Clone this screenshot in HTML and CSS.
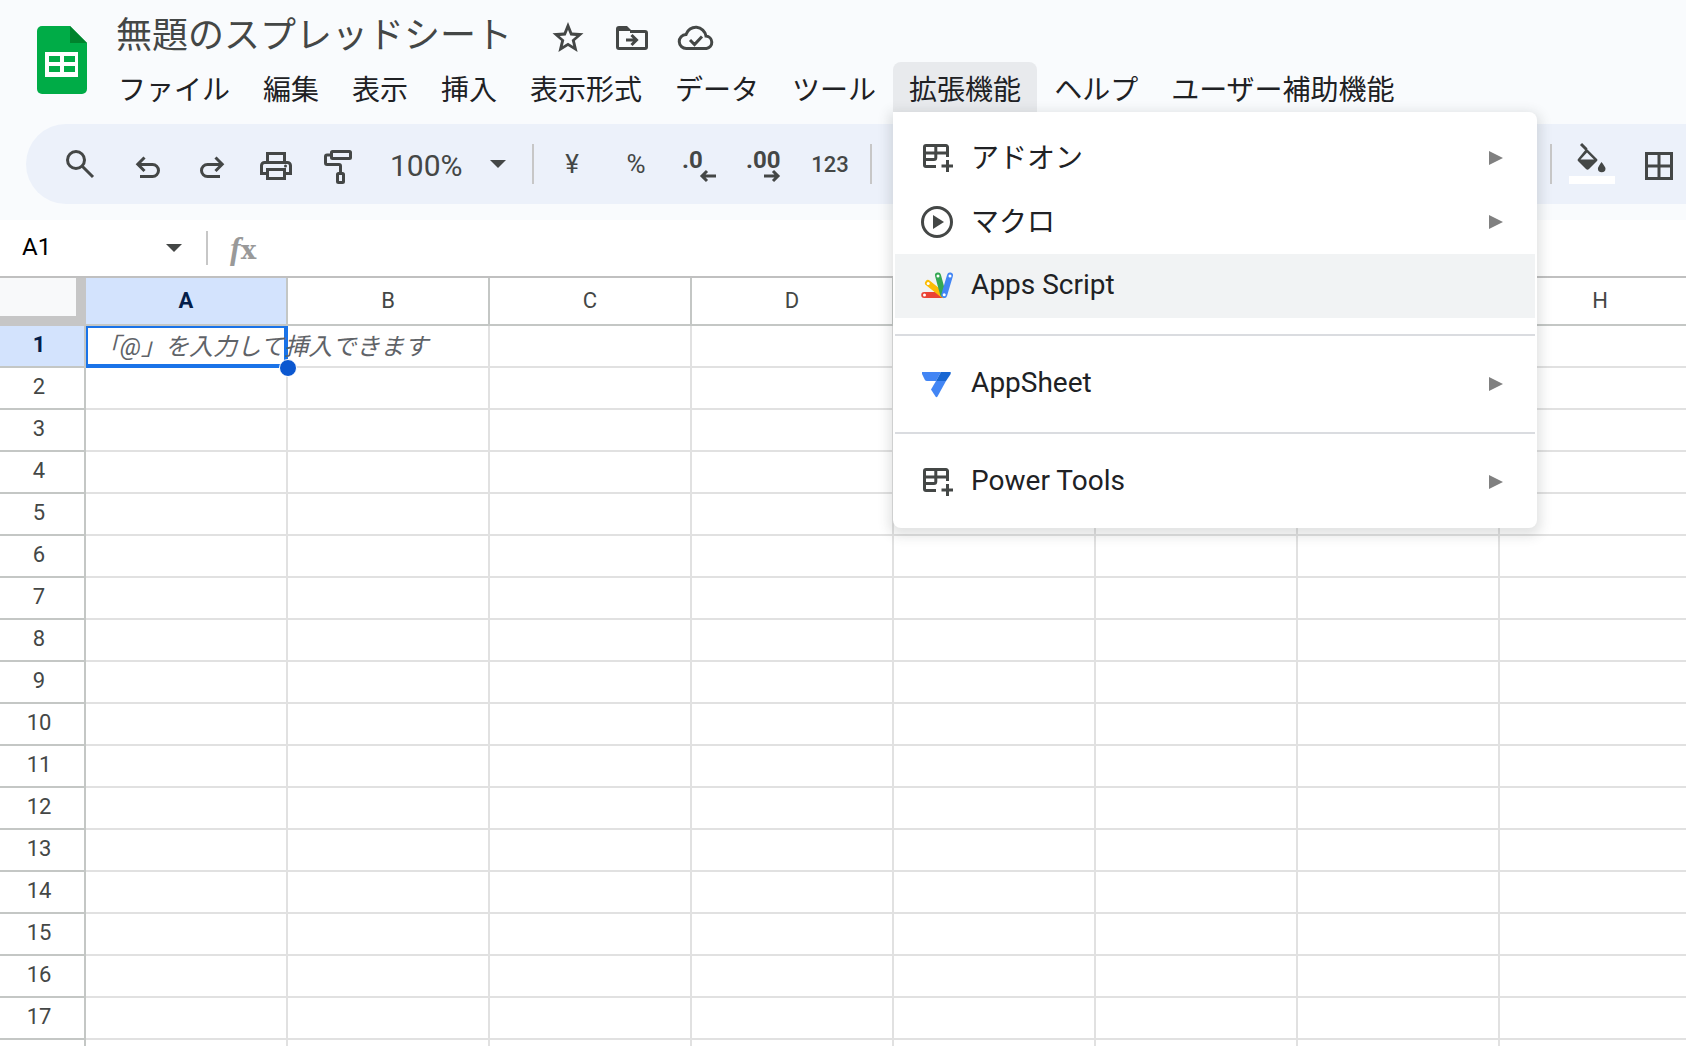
FILE: index.html
```html
<!DOCTYPE html>
<html lang="ja">
<head>
    <meta charset="UTF-8">
    <meta name="viewport" content="width=device-width, initial-scale=1.0">
    <title>無題のスプレッドシート</title>
    <link rel="stylesheet" href="styles.css">
</head>
<body>
    <header class="header">
        <a class="logo" href="#" aria-label="スプレッドシート ホーム">
            <svg width="50" height="68" viewBox="0 0 50 68">
                <path fill="#00ac47" d="M5 0H33L50 17V63a5 5 0 0 1-5 5H5a5 5 0 0 1-5-5V5a5 5 0 0 1 5-5z"/>
                <path fill="#00832d" d="M33 0V17H50z"/>
                <path fill="#fff" fill-rule="evenodd" d="M8 26H41V51H8zM12 30V36H23V30zM27 30V36H38V30zM12 40V46H23V40zM27 40V46H38V40z"/>
            </svg>
        </a>
        <div class="header-main">
            <div class="title-row">
                <input class="title" type="text" value="無題のスプレッドシート" aria-label="名前を変更">
                <button class="icon-button" aria-label="スター">
                    <svg class="icon" viewBox="0 0 40 40">
                        <path fill="#444746" fill-rule="evenodd" d="M20 8l4.200 10.400 11.300 .9-8.600 7.400 2.700 11.300-9.600-6-9.600 6 2.700-11.300-8.600-7.400 11.300-.9zM20 15.700l-2.300 5.700-6 .5 4.600 4-1.500 6.100 5.200-3.300 5.200 3.300-1.500-6.100 4.600-4-6-.5z"/>
                    </svg>
                </button>
                <button class="icon-button" aria-label="移動">
                    <svg class="icon" viewBox="0 0 40 40">
                        <path fill="#444746" d="M7 12H15L20 17H4V15a3 3 0 0 1 3-3z"/>
                        <path class="line" d="M18 17.500H33a1.500 1.500 0 0 1 1.500 1.500V33a1.500 1.500 0 0 1-1.500 1.500H7A1.500 1.500 0 0 1 5.500 33V15M14 26H24M19.500 21l5 5-5 5"/>
                    </svg>
                </button>
                <button class="icon-button" aria-label="ドキュメントのステータスを確認">
                    <svg class="icon" viewBox="0 0 40 40">
                        <path class="line" d="M10.500 34.500a7 7 0 0 1-.5-14A10.300 10.300 0 0 1 30 22a6.300 6.300 0 0 1 .5 12.500zM14 26l4.500 4.500 7.500-8"/>
                    </svg>
                </button>
            </div>
            <nav class="menubar">
                <div class="menubar-item"><button>ファイル</button></div>
                <div class="menubar-item"><button>編集</button></div>
                <div class="menubar-item"><button>表示</button></div>
                <div class="menubar-item"><button>挿入</button></div>
                <div class="menubar-item"><button>表示形式</button></div>
                <div class="menubar-item"><button>データ</button></div>
                <div class="menubar-item"><button>ツール</button></div>
                <div class="menubar-item open">
                    <button aria-expanded="true">拡張機能</button>
                    <div class="menu">
                        <button class="menu-row">
                            <svg class="menu-icon" viewBox="0 0 32 32"><use href="#addon"/></svg>
                            <span>アドオン</span>
                            <svg class="submenu-arrow" viewBox="0 0 14 14"><path d="M0 0L14 7L0 14z"/></svg>
                        </button>
                        <button class="menu-row">
                            <svg class="menu-icon" viewBox="0 0 32 32">
                                <circle class="line" cx="16" cy="16" r="14.500"/>
                                <path fill="#444746" d="M12 9L23 16L12 23z"/>
                            </svg>
                            <span>マクロ</span>
                            <svg class="submenu-arrow" viewBox="0 0 14 14"><path d="M0 0L14 7L0 14z"/></svg>
                        </button>
                        <button class="menu-row active">
                            <svg class="menu-icon" viewBox="0 0 32 32" stroke-width="6" stroke-linecap="round">
                                <path stroke="#ea4335" d="M3.200 25H22"/>
                                <path stroke="#fbbc04" d="M7 13L22 25"/>
                                <path stroke="#34a853" d="M17 5.500L22 24"/>
                                <path stroke="#4285f4" d="M29 5.500L23.200 25"/>
                                <g fill="#fff">
                                    <circle cx="3.500" cy="25" r="1.500"/>
                                    <circle cx="7.200" cy="13.500" r="1.500"/>
                                    <circle cx="17" cy="6" r="1.500"/>
                                    <circle cx="29" cy="6" r="1.500"/>
                                    <circle cx="23.200" cy="24.800" r="1.500"/>
                                </g>
                            </svg>
                            <span>Apps Script</span>
                        </button>
                        <hr>
                        <button class="menu-row">
                            <svg class="menu-icon" viewBox="0 0 32 32">
                                <path fill="#4285f4" d="M1 4H20L15 13H6q-1.500 0-2.200-1.300L1 6z"/>
                                <path fill="#1967d2" d="M20 4H29.700V6L25 13H15z"/>
                                <path fill="#4285f4" d="M15 13H25L16.500 28.500q-1 1.500-2 0L10 21.500z"/>
                            </svg>
                            <span>AppSheet</span>
                            <svg class="submenu-arrow" viewBox="0 0 14 14"><path d="M0 0L14 7L0 14z"/></svg>
                        </button>
                        <hr>
                        <button class="menu-row">
                            <svg class="menu-icon" viewBox="0 0 32 32"><use href="#addon"/></svg>
                            <span>Power Tools</span>
                            <svg class="submenu-arrow" viewBox="0 0 14 14"><path d="M0 0L14 7L0 14z"/></svg>
                        </button>
                    </div>
                </div>
                <div class="menubar-item"><button>ヘルプ</button></div>
                <div class="menubar-item"><button>ユーザー補助機能</button></div>
            </nav>
        </div>
    </header>

    <div class="toolbar">
        <button class="icon-button search" aria-label="メニューを検索">
            <svg class="icon" viewBox="0 0 40 40">
                <circle class="line" cx="16" cy="16" r="8.500"/>
                <path class="line" d="M22 22L33 33"/>
            </svg>
        </button>
        <button class="icon-button" aria-label="元に戻す">
            <svg class="icon" viewBox="0 0 40 40">
                <path class="line" d="M12 32.500H24.500a6 6 0 0 0 0-12H10M16.500 13.500L9.800 20.300L16.500 27"/>
            </svg>
        </button>
        <button class="icon-button" aria-label="やり直し">
            <svg class="icon" viewBox="0 0 40 40">
                <path class="line" d="M28 32.500H15.500a6 6 0 0 1 0-12H30M23.500 13.500L30.200 20.300L23.500 27"/>
            </svg>
        </button>
        <button class="icon-button" aria-label="印刷">
            <svg class="icon" viewBox="0 0 40 40">
                <path class="line" d="M11.500 18V9.500H28.500V18M11.500 29.500H5.500V21.500a3 3 0 0 1 3-3H31.500a3 3 0 0 1 3 3V29.500H28.500M11.500 25.500H28.500V34.500H11.500z"/>
                <circle fill="#444746" cx="29.500" cy="22" r="1.500"/>
            </svg>
        </button>
        <button class="icon-button" aria-label="書式を貼り付け">
            <svg class="icon" viewBox="0 0 40 40">
                <rect class="line" x="11.500" y="7.500" width="19" height="7" rx="1"/>
                <rect class="line" x="17.500" y="29.500" width="6" height="9" rx="1"/>
                <path class="line" d="M11 11H7a1.500 1.500 0 0 0-1.500 1.500V19a1.500 1.500 0 0 0 1.500 1.500H19a1.500 1.500 0 0 1 1.500 1.500V29"/>
            </svg>
        </button>
        <div class="zoom">
            <select aria-label="ズーム">
                <option>50%</option>
                <option selected>100%</option>
                <option>200%</option>
            </select>
            <svg class="caret" viewBox="0 0 16 8"><path d="M0 0H16L8 8z"/></svg>
        </div>
        <span class="separator"></span>
        <button class="icon-button" aria-label="通貨の表示形式">¥</button>
        <button class="icon-button" aria-label="パーセント表示形式">%</button>
        <button class="icon-button" aria-label="小数点以下の桁数を減らす">
            <svg class="icon" viewBox="0 0 40 40">
                <text x="2" y="24">.0</text>
                <path class="line" d="M36 32H23M27 27L22 32L27 37"/>
            </svg>
        </button>
        <button class="icon-button" aria-label="小数点以下の桁数を増やす">
            <svg class="icon" viewBox="0 0 40 40">
                <text x="2" y="24">.00</text>
                <path class="line" d="M20 32H33M29 27L34 32L29 37"/>
            </svg>
        </button>
        <button class="icon-button formats" aria-label="表示形式の詳細設定">123</button>
        <span class="separator"></span>
        <div class="toolbar-end">
            <span class="separator"></span>
            <button class="icon-button fill" aria-label="塗りつぶしの色">
                <svg class="icon" viewBox="0 0 40 32">
                    <path class="line" d="M9 0L14.500 5.500"/>
                    <path fill="#444746" fill-rule="evenodd" d="M14.500 4.500L25 15q1 1 0 2L17 25q-1.500 1.500-3 0L6 17q-1-1 0-2zM15 8.500L8.500 15.500H22z"/>
                    <path fill="#444746" d="M29.500 18q4 5 4 6.500a3.800 3.800 0 0 1-7.600 0q0-1.500 3.600-6.500z"/>
                </svg>
                <span class="fill-color"></span>
            </button>
            <button class="icon-button" aria-label="枠線">
                <svg class="icon" viewBox="0 0 40 40">
                    <path class="line" d="M10.500 9.500H35.500V34.500H10.500zM23 9.500V34.500M10.500 22H35.500"/>
                </svg>
            </button>
        </div>
    </div>

    <div class="formula-bar">
        <input class="name-box" type="text" value="A1" aria-label="名前ボックス">
        <button class="name-arrow" aria-label="名前付き範囲">
            <svg class="caret" viewBox="0 0 16 8"><path d="M0 0H16L8 8z"/></svg>
        </button>
        <span class="separator"></span>
        <label class="fx" for="formula"><i>f</i>x</label>
        <input class="formula" id="formula" type="text">
    </div>

    <main class="sheet">
        <table class="grid">
            <thead>
                <tr>
                    <th class="corner"></th>
                    <th class="selected">A</th>
                    <th>B</th>
                    <th>C</th>
                    <th>D</th>
                    <th>E</th>
                    <th>F</th>
                    <th>G</th>
                    <th>H</th>
                </tr>
            </thead>
            <tbody id="rows">
                <tr>
                    <th class="selected">1</th>
                    <td class="current">
                        <span class="hint">「@」を入力して挿入できます</span>
                        <span class="handle"></span>
                    </td>
                    <td></td><td></td><td></td><td></td><td></td><td></td><td></td>
                </tr>
            </tbody>
        </table>
    </main>

    <svg class="symbols" aria-hidden="true">
        <symbol id="addon" viewBox="0 0 32 32">
            <path class="line" d="M26.500 15V5a1.500 1.500 0 0 0-1.500-1.500H5A1.500 1.500 0 0 0 3.500 5V23a1.500 1.500 0 0 0 1.500 1.500H15M3.500 11H26.500M14.800 3.500V15.500q0 2-2 2H3.500"/>
            <path class="line" d="M26.500 18V30M20.500 24H32"/>
        </symbol>
    </svg>

    <script>
        const ROW_COUNT = 18;
        const COLUMN_COUNT = 8;
        const rows = document.getElementById('rows');

        for (let i = 2; i <= ROW_COUNT; i++) {
            const row = document.createElement('tr');
            row.innerHTML = `<th>${i}</th>` + '<td></td>'.repeat(COLUMN_COUNT);
            rows.appendChild(row);
        }
    </script>
</body>
</html>
```
FILE: styles.css
```css
* {
    box-sizing: border-box;
}
body {
    margin: 0;
    height: 100vh;
    display: flex;
    flex-direction: column;
    overflow: hidden;
    background-color: #f9fbfd;
    color: #202124;
    font-family: Roboto, "Noto Sans CJK JP", sans-serif;
    font-size: 28px;
}
button,
input,
select {
    margin: 0;
    padding: 0;
    border: none;
    background: none;
    color: inherit;
    font: inherit;
    outline: none;
}
button {
    cursor: pointer;
}
svg {
    display: block;
    fill: none;
}
.line {
    fill: none;
    stroke: #444746;
    stroke-width: 3;
}
.symbols {
    display: none;
}

/* header */
.header {
    display: flex;
}
.logo {
    padding: 26px 15px 0 37px;
}
.title-row {
    display: flex;
    align-items: center;
    height: 62px;
    padding-top: 6px;
}
.title {
    width: 434px;
    height: 56px;
    padding: 0 14px 4px;
    color: #444746;
    font-size: 36px;
}
.icon-button {
    display: flex;
    flex: none;
    align-items: center;
    justify-content: center;
    width: 64px;
    height: 56px;
    color: #444746;
    font-size: 26px;
}
.icon {
    width: 40px;
    height: 40px;
    overflow: visible;
}
.icon text {
    fill: #444746;
    font-size: 24px;
    font-weight: 700;
}

/* menus */
.menubar {
    display: flex;
    gap: 1px;
}
.menubar-item {
    position: relative;
}
.menubar-item > button {
    height: 50px;
    padding: 2px 16px 0;
    border-radius: 8px 8px 0 0;
    white-space: nowrap;
}
.menubar-item.open > button {
    background-color: #e8eaed;
}
.menu {
    position: absolute;
    top: 100%;
    left: 0;
    z-index: 10;
    width: 644px;
    padding: 14px 2px;
    border-radius: 0 8px 8px 8px;
    background-color: #fff;
    box-shadow: 0 4px 12px 4px rgba(60, 64, 67, 0.15);
}
.menu hr {
    height: 2px;
    margin: 16px 0;
    border: none;
    background-color: #dadce0;
}
.menu-row {
    display: flex;
    align-items: center;
    gap: 18px;
    width: 100%;
    height: 64px;
    padding: 0 32px 0 26px;
    text-align: left;
}
.menu-row span {
    padding-bottom: 4px;
}
.menu-row.active {
    background-color: #f1f3f4;
}
.menu-icon {
    width: 32px;
    height: 32px;
}
.submenu-arrow {
    width: 14px;
    height: 14px;
    margin-left: auto;
    fill: #808080;
}

/* toolbar */
.toolbar {
    display: flex;
    align-items: center;
    height: 80px;
    margin: 12px -2px 16px 26px;
    padding-left: 22px;
    border-radius: 40px 0 0 40px;
    background-color: #ecf1fa;
}
.search {
    margin-right: 4px;
}
.separator {
    flex: none;
    width: 2px;
    height: 40px;
    background-color: #c7c7c7;
}
.toolbar .separator {
    margin: 0 6px;
}
.zoom {
    display: grid;
    align-items: center;
    width: 154px;
    color: #444746;
    font-size: 30px;
}
.zoom select {
    grid-area: 1 / 1;
    height: 56px;
    padding: 2px 18px 0;
    appearance: none;
}
.zoom .caret {
    grid-area: 1 / 1;
    justify-self: end;
    margin-right: 20px;
    pointer-events: none;
}
.caret {
    width: 16px;
    height: 8px;
    fill: #444746;
}
.formats {
    width: 68px;
    font-size: 22px;
    font-weight: 500;
}
.toolbar-end {
    display: flex;
    align-items: center;
    margin-left: auto;
}
.toolbar-end .separator {
    margin-right: 8px;
}
.fill {
    flex-direction: column;
    justify-content: space-between;
    height: 40px;
}
.fill .icon {
    height: 32px;
}
.fill-color {
    width: 46px;
    height: 8px;
    background-color: #fff;
}

/* formula bar */
.formula-bar {
    display: flex;
    align-items: center;
    height: 58px;
    border-bottom: 2px solid #c0c0c0;
    background-color: #fff;
}
.formula-bar .separator {
    height: 34px;
}
.name-box {
    width: 142px;
    height: 48px;
    padding: 0 0 2px 22px;
    color: #000;
    font-size: 24px;
}
.name-arrow {
    height: 48px;
    padding: 0 24px;
}
.fx {
    padding: 0 22px;
    color: #999;
    font-family: "DejaVu Serif", serif;
    font-size: 26px;
    font-weight: 700;
}
.fx i {
    font-family: "Liberation Serif", serif;
    font-size: 32px;
}
.formula {
    flex: 1;
    height: 48px;
}

/* sheet */
.sheet {
    flex: 1;
    min-height: 0;
    overflow: hidden;
    background-color: #fff;
}
.grid {
    width: calc(86px + 8 * 202px);
    table-layout: fixed;
    border-collapse: separate;
    border-spacing: 0;
    font-size: 22px;
    line-height: 24px;
}
.grid th,
.grid td {
    height: 42px;
    padding: 0;
    border: solid #e1e1e1;
    border-width: 0 2px 2px 0;
}
.grid th {
    border-color: #c4c7c5;
    color: #444746;
    font-weight: 400;
}
.grid thead th {
    height: 48px;
}
.grid tbody th {
    padding: 0 6px 3px 0;
}
.grid .corner {
    width: 86px;
    border-width: 0 10px 10px 0;
    border-color: #c6c6c6;
    background-color: #f8f9fa;
}
.grid th.selected {
    background-color: #d3e3fd;
    color: #041e49;
    font-weight: 700;
}
.grid .current {
    position: relative;
    padding: 2px 0 0 10px;
    box-shadow: inset 0 2px #1a73e8, inset 2px 0 #1a73e8, inset -2px -2px #1a73e8;
    border-color: #1a73e8;
}
.hint {
    display: block;
    width: 0;
    color: #5f6368;
    font-size: 24px;
    font-style: italic;
    white-space: nowrap;
}
.handle {
    position: absolute;
    right: -11px;
    bottom: -11px;
    width: 18px;
    height: 18px;
    border: 1px solid #fff;
    border-radius: 50%;
    background-color: #0b57d0;
}
```
